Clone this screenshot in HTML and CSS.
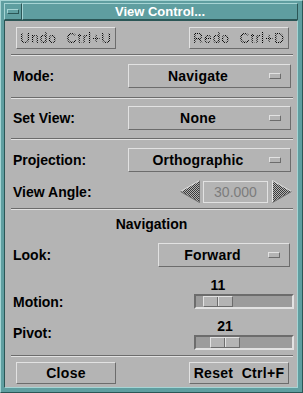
FILE: index.html
```html
<!DOCTYPE html>
<html lang="en">
<head>
    <meta charset="UTF-8">
    <title>View Control...</title>
    <link rel="stylesheet" href="styles.css">
</head>
<body>
    <div class="window">
        <div class="titlebar">
            <div class="menu-btn"><span></span></div>
            <div class="title">View Control...</div>
        </div>
        <div class="content">
            <div class="btn-row top-row">
                <div class="btn disabled"><span class="stipple">Undo  Ctrl+U</span></div>
                <div class="btn disabled"><span class="stipple">Redo  Ctrl+D</span></div>
            </div>
            <div class="sep sep-1"></div>
            <div class="row row-mode">
                <span class="label">Mode:</span>
                <div class="option">
                    <span class="option-text">Navigate</span>
                    <span class="indicator"></span>
                </div>
            </div>
            <div class="sep sep-2"></div>
            <div class="row row-view">
                <span class="label">Set View:</span>
                <div class="option">
                    <span class="option-text">None</span>
                    <span class="indicator"></span>
                </div>
            </div>
            <div class="sep sep-3"></div>
            <div class="row row-proj">
                <span class="label">Projection:</span>
                <div class="option">
                    <span class="option-text">Orthographic</span>
                    <span class="indicator"></span>
                </div>
            </div>
            <div class="row row-angle">
                <span class="label">View Angle:</span>
                <div class="spin">
                    <svg class="arrow" width="20" height="23" viewBox="0 0 20 23">
                        <defs>
                            <pattern id="chk" width="2" height="2" patternUnits="userSpaceOnUse">
                                <rect width="2" height="2" fill="#b4b4b4"/>
                                <rect width="1" height="1" fill="#3a3a3a"/>
                                <rect x="1" y="1" width="1" height="1" fill="#3a3a3a"/>
                            </pattern>
                        </defs>
                        <polygon points="0.5,11.5 19.5,0.5 19.5,22.5" fill="url(#chk)"/>
                        <line x1="0.5" y1="11.5" x2="19.5" y2="0.5" stroke="#e2e2e2"/>
                        <line x1="0.5" y1="11.5" x2="19.5" y2="22.5" stroke="#6c6c6c"/>
                        <line x1="19.5" y1="0.5" x2="19.5" y2="22.5" stroke="#6c6c6c"/>
                    </svg>
                    <div class="field">30.000</div>
                    <svg class="arrow" width="20" height="23" viewBox="0 0 20 23">
                        <polygon points="0.5,0.5 19.5,11.5 0.5,22.5" fill="url(#chk)"/>
                        <line x1="0.5" y1="0.5" x2="0.5" y2="22.5" stroke="#e2e2e2"/>
                        <line x1="0.5" y1="0.5" x2="19.5" y2="11.5" stroke="#e2e2e2"/>
                        <line x1="0.5" y1="22.5" x2="19.5" y2="11.5" stroke="#6c6c6c"/>
                    </svg>
                </div>
            </div>
            <div class="sep sep-4"></div>
            <div class="heading">Navigation</div>
            <div class="row row-look">
                <span class="label">Look:</span>
                <div class="option option-look">
                    <span class="option-text">Forward</span>
                    <span class="indicator"></span>
                </div>
            </div>
            <div class="row row-motion">
                <span class="label">Motion:</span>
                <div class="scale">
                    <div class="scale-value"><span style="margin-left: 7px">11</span></div>
                    <div class="trough"><div class="thumb" style="margin-left: 7px"><span></span></div></div>
                </div>
            </div>
            <div class="row row-pivot">
                <span class="label">Pivot:</span>
                <div class="scale">
                    <div class="scale-value"><span style="margin-left: 14px">21</span></div>
                    <div class="trough"><div class="thumb" style="margin-left: 14px"><span></span></div></div>
                </div>
            </div>
            <div class="sep sep-5"></div>
            <div class="btn-row bottom-row">
                <div class="btn">Close</div>
                <div class="btn">Reset  Ctrl+F</div>
            </div>
        </div>
    </div>
</body>
</html>
```

FILE: styles.css
```css
body {
    margin: 0;
    font-family: "Liberation Sans", Arial, sans-serif;
    font-size: 14px;
    font-weight: bold;
    color: #000;
}
.window {
    width: 303px;
    height: 393px;
    box-sizing: border-box;
    background: #5f9ea0;
    border: 1px solid;
    border-color: #a6d4d4 #2b5656 #2b5656 #a6d4d4;
    padding: 2px 4px 4px 3px;
    display: flex;
    flex-direction: column;
}
.titlebar {
    height: 17px;
    display: flex;
}
.menu-btn {
    width: 18px;
    box-sizing: border-box;
    border: 1px solid;
    border-color: #a6d4d4 #2b5656 #2b5656 #a6d4d4;
    display: flex;
    align-items: center;
    justify-content: center;
}
.menu-btn span {
    width: 10px;
    height: 3px;
    border: 1px solid;
    border-color: #a6d4d4 #2b5656 #2b5656 #a6d4d4;
}
.title {
    flex: 1;
    box-sizing: border-box;
    border: 1px solid;
    border-color: #a6d4d4 #2b5656 #2b5656 #a6d4d4;
    color: #fff;
    font-size: 13px;
    line-height: 15px;
    text-align: center;
}
.content {
    flex: 1;
    background: #b4b4b4;
    border: 1px solid;
    border-color: #2b5656 #a6d4d4 #a6d4d4 #2b5656;
    padding: 6px 5px 0 6px;
}
.btn-row {
    display: flex;
    justify-content: space-between;
    padding: 0 3px 0 5px;
}
.btn {
    width: 100px;
    height: 22px;
    box-sizing: border-box;
    border: 1px solid;
    border-color: #e2e2e2 #6c6c6c #6c6c6c #e2e2e2;
    line-height: 20px;
    text-align: center;
    white-space: pre;
    letter-spacing: 0.3px;
}
.stipple {
    color: transparent;
    background: repeating-conic-gradient(#000 0 25%, transparent 0 50%) 0 0 / 2px 2px;
    -webkit-background-clip: text;
    background-clip: text;
    font-weight: normal;
    letter-spacing: 0.9px;
}
.sep {
    height: 1px;
    background: #6c6c6c;
    border-bottom: 1px solid #e2e2e2;
    margin-right: -1px;
}
.sep-1 { margin-top: 5px; }
.sep-2 { margin-top: 9px; }
.sep-3 { margin-top: 8px; }
.sep-4 { margin-top: 5px; }
.sep-5 { margin-top: 5px; }
.row {
    display: flex;
    align-items: center;
    justify-content: space-between;
}
.label {
    padding-left: 2px;
    line-height: 16px;
}
.row-mode { margin-top: 8px; }
.row-view { margin-top: 7px; }
.row-proj { margin-top: 8px; }
.row-angle { margin-top: 8px; height: 23px; }
.row-look { margin-top: 11px; }
.option {
    width: 163px;
    height: 24px;
    box-sizing: border-box;
    margin-right: 1px;
    border: 1px solid;
    border-color: #e2e2e2 #6c6c6c #6c6c6c #e2e2e2;
    display: flex;
    align-items: center;
}
.option-look {
    width: 132px;
    margin-right: 2px;
}
.option-text {
    flex: 1;
    text-align: center;
    padding-left: 1px;
    letter-spacing: 0.2px;
}
.indicator {
    width: 12px;
    height: 6px;
    box-sizing: border-box;
    margin: 0 9px 0 3px;
    border: 1px solid;
    border-color: #e2e2e2 #6c6c6c #6c6c6c #e2e2e2;
}
.spin {
    display: flex;
    align-items: center;
}
.arrow {
    display: block;
}
.field {
    width: 65px;
    height: 22px;
    box-sizing: border-box;
    margin: 0 4px 0 3px;
    border: 1px solid #e2e2e2;
    color: #7c7c7c;
    font-weight: normal;
    line-height: 20px;
    text-align: center;
}
.heading {
    margin-top: 6px;
    height: 16px;
    line-height: 16px;
    text-align: center;
}
.row-motion, .row-pivot {
    align-items: flex-start;
}
.row-motion { margin-top: 10px; }
.row-pivot { margin-top: 8px; }
.row-motion .label { margin-top: 17px; }
.row-pivot .label { margin-top: 7px; }
.scale {
    width: 100px;
    margin-right: -2px;
}
.scale-value {
    height: 17px;
    line-height: 17px;
    padding-left: 2px;
}
.scale-value span {
    display: block;
    width: 30px;
    text-align: center;
}
.trough {
    height: 15px;
    box-sizing: border-box;
    border: 2px solid;
    border-color: #6c6c6c #e2e2e2 #e2e2e2 #6c6c6c;
    background: #9c9c9c;
}
.thumb {
    width: 30px;
    height: 11px;
    box-sizing: border-box;
    border: 1px solid;
    border-color: #e2e2e2 #6c6c6c #6c6c6c #e2e2e2;
    background: #b4b4b4;
    display: flex;
    justify-content: center;
}
.thumb span {
    width: 0;
    border-left: 1px solid #6c6c6c;
    border-right: 1px solid #e2e2e2;
}
.bottom-row { margin-top: 5px; }
```
